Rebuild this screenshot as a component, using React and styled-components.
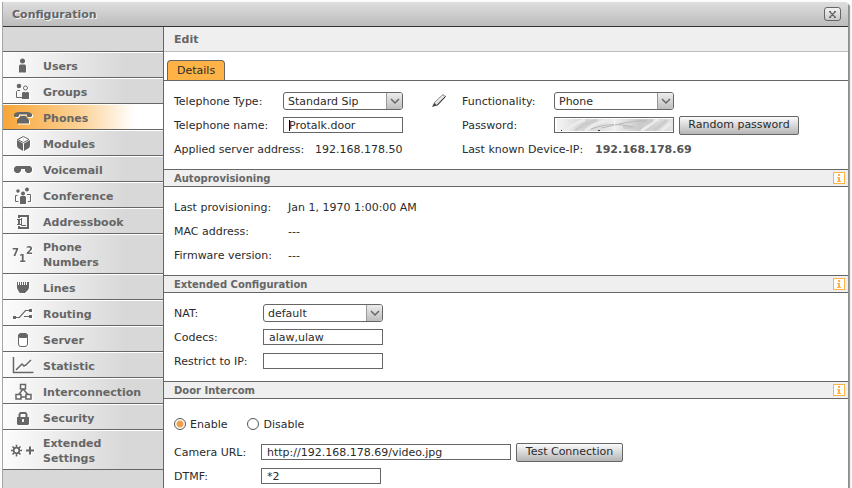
import React from "react";
import styled, { createGlobalStyle, css } from "styled-components";

const ink = "#666666";
const line = "#666666";
const orange = "#ffb347";

const GlobalStyle = createGlobalStyle`
  *, *::before, *::after { box-sizing: border-box; }
  body {
    margin: 0;
    background: #fcfcfc;
    color: #2b2b2b;
    font: 11px/15px "DejaVu Sans", Verdana, sans-serif;
  }
  input, select, button { font: inherit; color: inherit; margin: 0; }
`;

const Viewport = styled.div`
  display: flex;
  height: 100vh;
  padding: 2px 4px 0 2px;
  overflow: hidden;
`;

const Window = styled.div`
  flex: 1;
  display: flex;
  flex-direction: column;
  min-width: 0;
  border-left: 1px solid #a5a5a5;
  border-radius: 0 3px 0 0;
  background: #ffffff;
  box-shadow: 2px 2px 1px #8f8f8f;
`;

const TitleBar = styled.header`
  display: flex;
  flex: none;
  align-items: center;
  justify-content: space-between;
  height: 25px;
  padding: 0 7px 0 9px;
  border-bottom: 1px solid #333333;
  border-radius: 0 3px 0 0;
  background: linear-gradient(#dedede, #bcbcbc);
`;

const Title = styled.h1`
  margin: 0;
  font-size: 11px;
  color: ${ink};
  text-shadow: 1px 1px 0 #f4f4f4;
`;

const raised = css`
  border: 1px solid ${line};
  border-radius: 2px;
  background: linear-gradient(#fbfbfb, #b5b5b5);
`;

const CloseButton = styled.button`
  ${raised}
  display: grid;
  place-items: center;
  width: 17px;
  height: 14px;
  padding: 0;
  border-radius: 3px;
  background: linear-gradient(#f2f2f2, #c9c9c9);
`;

const Columns = styled.div`
  display: flex;
  flex: 1;
  min-height: 0;
`;

const Sidebar = styled.nav`
  flex: none;
  width: 161px;
  padding-top: 24px;
  border-right: 1px solid ${line};
  background: #d8d8d8;
`;

const Menu = styled.ul`
  margin: 0;
  padding: 0;
  list-style: none;
  border-top: 1px solid ${line};
`;

const MenuLink = styled.a`
  display: flex;
  align-items: center;
  gap: 8px;
  min-height: 26px;
  padding: 6px 0 3px 8px;
  border-bottom: 1px solid ${line};
  box-shadow: inset 0 1px 0 #ffffff;
  background: ${(p) =>
    p.$active
      ? "linear-gradient(90deg, #f7a638, #fcd49b 50%, #ffffff 82%)"
      : "linear-gradient(90deg, #fcfcfc, #d8d8d8 76%)"};
  color: ${ink};
  font-weight: bold;
  text-decoration: none;
  white-space: pre-line;
`;

const Glyph = styled.svg`
  flex: none;
  width: 24px;
  height: 24px;
  margin: -6px 0 -3px;
  overflow: visible;
  filter: drop-shadow(1px 1px 0 #ffffff);
`;

const Main = styled.main`
  flex: 1;
  min-width: 0;
`;

const PageHeading = styled.h2`
  height: 25px;
  margin: 0;
  padding: 0 10px;
  border-bottom: 1px solid #bdbdbd;
  background: #efefef;
  color: ${ink};
  font-size: 11px;
  line-height: 26px;
`;

const TabBar = styled.div`
  display: flex;
  align-items: flex-end;
  height: 29px;
  padding-left: 3px;
  border-bottom: 1px solid ${line};
`;

const Tab = styled.button`
  height: 20px;
  padding: 0 9px;
  border: 1px solid ${line};
  border-bottom: 0;
  border-radius: 4px 4px 0 0;
  background: ${orange};
`;

const SectionHeading = styled.div`
  display: flex;
  align-items: center;
  justify-content: space-between;
  height: 18px;
  padding: 0 3px 0 10px;
  border: solid ${line};
  border-width: 1px 0;
  background: #efefef;
`;

const SectionTitle = styled.h3`
  margin: 0;
  color: ${ink};
  font-size: 10px;
`;

const InfoButton = styled.button`
  display: grid;
  width: 12px;
  height: 12px;
  padding: 0;
  border: 1px solid ${orange};
  background: #ffffff;
`;

const Fields = styled.div`
  padding: ${(p) => p.$top || 8}px 10px 8px;
`;

const PairedFields = styled(Fields)`
  display: grid;
  grid-template-columns: 288px 1fr;
`;

const Row = styled.div`
  display: flex;
  align-items: center;
  height: 24px;
`;

const RadioRow = styled(Row)`
  gap: 20px;
  margin-bottom: 4px;
`;

const FieldName = styled.label`
  flex: none;
  width: ${(p) => p.$width}px;
`;

const Caption = styled.span`
  flex: none;
  width: ${(p) => p.$width}px;
`;

const DeviceIp = styled.strong`
  color: #555555;
`;

const SelectBox = styled.div`
  position: relative;
  width: 120px;
  height: 18px;
`;

const NativeSelect = styled.select`
  appearance: none;
  display: block;
  width: 100%;
  height: 100%;
  padding: 0 18px 0 4px;
  border: 1px solid ${line};
  border-radius: 3px;
  background: #ffffff;
`;

const SelectArrow = styled.span`
  position: absolute;
  inset: 1px 1px 1px auto;
  display: grid;
  place-items: center;
  width: 16px;
  border-left: 1px solid #999999;
  border-radius: 0 2px 2px 0;
  background: linear-gradient(#ececec, #bebebe);
  pointer-events: none;
`;

const InputBox = styled.div`
  position: relative;
  width: ${(p) => p.$width || 120}px;
`;

const TextInput = styled.input`
  display: block;
  width: 100%;
  height: 16px;
  padding: 0 5px;
  border: 1px solid ${line};
  border-radius: 0;
  background: #ffffff;
  outline: 0;
`;

const Caret = styled.span`
  position: absolute;
  top: 3px;
  left: 6px;
  width: 1px;
  height: 11px;
  background: #000000;
`;

const Smear = styled.svg`
  position: absolute;
  top: 2px;
  left: 3px;
  width: calc(100% - 4px);
  height: 12px;
`;

const PushButton = styled.button`
  ${raised}
  height: 19px;
  width: ${(p) => p.$width}px;
  margin-left: 5px;
  padding: 0;
  line-height: 16px;
  white-space: nowrap;
`;

const PencilButton = styled.button`
  display: grid;
  width: 16px;
  height: 16px;
  margin-left: 28px;
  padding: 0;
  border: 0;
  background: none;
`;

const Choice = styled.label`
  display: flex;
  align-items: center;
  gap: 4px;
`;

const Radio = styled.input`
  appearance: none;
  width: 12px;
  height: 12px;
  border: 1px solid #555555;
  border-radius: 50%;
  background: #ffffff;
  &:checked {
    background: radial-gradient(circle, #f0a04b 3px, #ffffff 4px);
  }
`;

const glyphs = {
  users: (
    <g fill={ink}>
      <circle cx="11.5" cy="8" r="2.5" />
      <path d="M8 12.500l1-1h5l1 1v7H8z" />
    </g>
  ),
  groups: (
    <g fill={ink}>
      <circle cx="8" cy="7" r="2.300" />
      <circle cx="14.5" cy="9" r="2" fill="#fff" stroke={ink} />
      <path d="M11 18.500H5.500v-6l1-1H9" fill="none" stroke={ink} />
      <path d="M11 14l1-1h2l.5 1 .5-1h2l1 1v6h-7z" />
    </g>
  ),
  phones: (
    <g fill={ink}>
      <path d="M3 11V9l2-1.500L8 7h8l3 .5L21 9v2l-1 1h-3l-1-1V9.500H8V11l-1 1H4z" />
      <path d="M9.500 11h5l3.500 4v3.500H6V15z" />
    </g>
  ),
  modules: (
    <g>
      <path d="M12.500 5.500l5.500 3-5.500 3-6-3z" fill="#fff" stroke={ink} />
      <path d="M6 9l6 3.500v7.500L7 17l-1-2zM19 9l-6 3.500v7.500l5-3 1-2z" fill={ink} />
      <path d="M12.500 7v3" stroke="#dddddd" />
    </g>
  ),
  voicemail: (
    <path d="M5 9h14l2 2v3l-2 2h-3l-2-2v-2h-4v2l-2 2H5l-2-2v-3z" fill={ink} />
  ),
  conference: (
    <g fill={ink}>
      <circle cx="7" cy="8" r="1.800" />
      <circle cx="16" cy="6.500" r="2" />
      <circle cx="12" cy="10.500" r="2" />
      <path d="M9 14l1-1h4l1 1v7H9z" />
      <path d="M7.500 18.500h-3v-6h2M16 11.500h3.500v7H17" fill="none" stroke={ink} />
    </g>
  ),
  addressbook: (
    <g fill="none" stroke={ink} strokeWidth="2">
      <path d="M8 9V7h9v12H8v-2M8 11v4" />
      <path d="M6 10.500h4M6 15.500h4" strokeWidth="1" />
      <path d="M10.500 9v7.500H15" strokeWidth="1" />
    </g>
  ),
  numbers: (
    <g fill={ink} fontFamily="DejaVu Sans, sans-serif" fontWeight="bold" fontSize="10">
      <text x="1" y="14">7</text>
      <text x="8" y="20">1</text>
      <text x="15" y="12">2</text>
    </g>
  ),
  lines: (
    <path d="M6 7h1v3h1V7h1v3h1V7h1v3h1V7h1v3h1V7h1v3h1V7h2v6l-1 2-2 2-1 1H9l-1-1-1-2-1-2z" fill={ink} />
  ),
  routing: (
    <g fill={ink}>
      <path d="M3 16.500h5.500l6-7H20M13 15.500h7" fill="none" stroke={ink} strokeWidth="1.200" />
      <path d="M2 15h3v3H2zM18 8h3v3h-3zM18 14h3v3h-3z" />
    </g>
  ),
  server: (
    <g>
      <rect x="7.500" y="7" width="9" height="12.500" rx="2.500" fill="#fff" stroke={ink} />
      <path d="M9 6h6l2 2v2l-2 1H9l-2-1V8z" fill={ink} />
    </g>
  ),
  statistic: (
    <g fill="none" stroke={ink}>
      <path d="M2.500 4v15.500H22.500" strokeWidth="1.500" />
      <path d="M5 17l6-6 2 2 2-1 5-5" strokeWidth="1.500" />
    </g>
  ),
  interconnection: (
    <g fill="#fff" stroke={ink} strokeWidth="1.500">
      <path d="M12 10l-4.500 6M12 10l5.500 6" />
      <path d="M9.500 5.500h5v4.500h-5zM5 15.500h5v4.500H5zM15 15.500h5v4.500h-5zM10 18h5" />
    </g>
  ),
  security: (
    <g>
      <path d="M8.500 13V9.500l1-1.500h5l1 1.500V13" fill="none" stroke={ink} strokeWidth="2" />
      <path d="M6 12h12v7l-1 1H7l-1-1z" fill={ink} />
      <path d="M11 14h2v3h-2z" fill="#eeeeee" />
    </g>
  ),
  extended: (
    <g fill="none" stroke={ink}>
      <circle cx="5.500" cy="12.500" r="2.800" strokeWidth="1.700" />
      <path d="M5.500 6.700v3M5.500 15.500v3M0 12.500h2.500M8.500 12.500H11M1.500 8.500l2 2M7.500 14.500l2 2M9.500 8.500l-2 2M3.500 14.500l-2 2" strokeWidth="1.600" />
      <path d="M19 8.500v8M15 12.500h8" strokeWidth="2" />
    </g>
  ),
};

const menu = [
  ["users", "Users"],
  ["groups", "Groups"],
  ["phones", "Phones"],
  ["modules", "Modules"],
  ["voicemail", "Voicemail"],
  ["conference", "Conference"],
  ["addressbook", "Addressbook"],
  ["numbers", "Phone\nNumbers"],
  ["lines", "Lines"],
  ["routing", "Routing"],
  ["server", "Server"],
  ["statistic", "Statistic"],
  ["interconnection", "Interconnection"],
  ["security", "Security"],
  ["extended", "Extended\nSettings"],
];

function Select({ id, value }) {
  return (
    <SelectBox>
      <NativeSelect id={id} defaultValue={value}>
        <option>{value}</option>
      </NativeSelect>
      <SelectArrow>
        <svg width="10" height="7" viewBox="0 0 10 7" aria-hidden="true">
          <path d="M1 1l4 4 4-4" fill="none" stroke={ink} strokeWidth="1.500" />
        </svg>
      </SelectArrow>
    </SelectBox>
  );
}

function Section({ title, children }) {
  return (
    <section>
      <SectionHeading>
        <SectionTitle>{title}</SectionTitle>
        <InfoButton aria-label={`About ${title}`}>
          <svg width="10" height="10" viewBox="0 0 10 10" aria-hidden="true">
            <path d="M4 1h2v2H4zM3 4h3v4h1v1H3V8h1V5H3z" fill={orange} />
          </svg>
        </InfoButton>
      </SectionHeading>
      {children}
    </section>
  );
}

function PasswordSmear() {
  return (
    <Smear viewBox="0 0 116 12" preserveAspectRatio="none" aria-hidden="true">
      <defs>
        <linearGradient id="smear" x1="0" x2="1" y1="0" y2="0">
          <stop offset="0" stopColor="#f5f5f5" />
          <stop offset=".25" stopColor="#d2d2d2" />
          <stop offset=".5" stopColor="#eeeeee" />
          <stop offset=".72" stopColor="#c8c8c8" />
          <stop offset="1" stopColor="#e4e4e4" />
        </linearGradient>
      </defs>
      <path d="M0 0h116v12H0z" fill="url(#smear)" />
      <g fill="none" strokeWidth="3">
        <path d="M8 12C14 8 18 3 28 1M28 12C34 7 40 4 50 1M84 12C90 9 94 3 102 0M104 12l10-8" stroke="#ececec" />
        <path d="M18 12C24 7 30 3 40 1M66 8C80 10 88 6 96 1M96 12l14-11" stroke="#cccccc" />
        <path d="M34 10C48 5 60 4 76 8M44 9C60 6 74 1 90 2" stroke="#b8b8b8" strokeWidth="1" />
      </g>
      <path d="M57 0h1v12h-1z" fill="#f4f4f4" />
      <path d="M4 11h1v1H4zM41 11h2v1h-2z" fill="#333333" />
    </Smear>
  );
}

export default function App() {
  return (
    <>
      <GlobalStyle />
      <Viewport>
        <Window>
          <TitleBar>
            <Title>Configuration</Title>
            <CloseButton aria-label="Close">
              <svg width="7" height="7" viewBox="0 0 7 7" aria-hidden="true">
                <path d="M0 .5h2M5 .5h2M0 6.500h2M5 6.500h2M1 1l5 5M6 1L1 6" stroke={ink} strokeWidth="1.300" />
              </svg>
            </CloseButton>
          </TitleBar>
          <Columns>
            <Sidebar aria-label="Configuration areas">
              <Menu>
                {menu.map(([key, label]) => (
                  <li key={key}>
                    <MenuLink href={`#${key}`} $active={key === "phones"}>
                      <Glyph viewBox="0 0 24 24" aria-hidden="true">{glyphs[key]}</Glyph>
                      <span>{label}</span>
                    </MenuLink>
                  </li>
                ))}
              </Menu>
            </Sidebar>
            <Main>
              <PageHeading>Edit</PageHeading>
              <TabBar role="tablist">
                <Tab role="tab" aria-selected="true">Details</Tab>
              </TabBar>
              <PairedFields>
                <Row>
                  <FieldName $width={109} htmlFor="type">Telephone Type:</FieldName>
                  <Select id="type" value="Standard Sip" />
                  <PencilButton aria-label="Edit telephone type">
                    <svg width="16" height="16" viewBox="0 0 16 16" aria-hidden="true">
                      <path d="M3 10L12 1.500l2.500 2L6 12.500z" fill="#d8d8d8" stroke="#888888" />
                      <path d="M6 12.500l8.500-9" stroke="#222222" />
                      <path d="M1 14l2-4 3 2.500z" fill="#444444" />
                      <path d="M4.500 10L12 3" stroke="#ffffff" />
                    </svg>
                  </PencilButton>
                </Row>
                <Row>
                  <FieldName $width={92} htmlFor="function">Functionality:</FieldName>
                  <Select id="function" value="Phone" />
                </Row>
                <Row>
                  <FieldName $width={109} htmlFor="name">Telephone name:</FieldName>
                  <InputBox>
                    <TextInput id="name" defaultValue="Protalk.door" />
                    <Caret />
                  </InputBox>
                </Row>
                <Row>
                  <FieldName $width={92} htmlFor="password">Password:</FieldName>
                  <InputBox>
                    <TextInput id="password" type="password" />
                    <PasswordSmear />
                  </InputBox>
                  <PushButton $width={120}>Random password</PushButton>
                </Row>
                <Row>
                  <Caption $width={141}>Applied server address:</Caption>
                  <span>192.168.178.50</span>
                </Row>
                <Row>
                  <Caption $width={133}>Last known Device-IP:</Caption>
                  <DeviceIp>192.168.178.69</DeviceIp>
                </Row>
              </PairedFields>
              <Section title="Autoprovisioning">
                <Fields>
                  <Row>
                    <Caption $width={114}>Last provisioning:</Caption>
                    <span>Jan 1, 1970 1:00:00 AM</span>
                  </Row>
                  <Row>
                    <Caption $width={114}>MAC address:</Caption>
                    <span>---</span>
                  </Row>
                  <Row>
                    <Caption $width={114}>Firmware version:</Caption>
                    <span>---</span>
                  </Row>
                </Fields>
              </Section>
              <Section title="Extended Configuration">
                <Fields>
                  <Row>
                    <FieldName $width={89} htmlFor="nat">NAT:</FieldName>
                    <Select id="nat" value="default" />
                  </Row>
                  <Row>
                    <FieldName $width={89} htmlFor="codecs">Codecs:</FieldName>
                    <InputBox>
                      <TextInput id="codecs" defaultValue="alaw,ulaw" />
                    </InputBox>
                  </Row>
                  <Row>
                    <FieldName $width={89} htmlFor="restrict">Restrict to IP:</FieldName>
                    <InputBox>
                      <TextInput id="restrict" />
                    </InputBox>
                  </Row>
                </Fields>
              </Section>
              <Section title="Door Intercom">
                <Fields $top={13}>
                  <RadioRow>
                    <Choice>
                      <Radio type="radio" name="intercom" defaultChecked />
                      Enable
                    </Choice>
                    <Choice>
                      <Radio type="radio" name="intercom" />
                      Disable
                    </Choice>
                  </RadioRow>
                  <Row>
                    <FieldName $width={87} htmlFor="camera">Camera URL:</FieldName>
                    <InputBox $width={250}>
                      <TextInput id="camera" defaultValue="http://192.168.178.69/video.jpg" />
                    </InputBox>
                    <PushButton $width={107}>Test Connection</PushButton>
                  </Row>
                  <Row>
                    <FieldName $width={87} htmlFor="dtmf">DTMF:</FieldName>
                    <InputBox>
                      <TextInput id="dtmf" defaultValue="*2" />
                    </InputBox>
                  </Row>
                </Fields>
              </Section>
            </Main>
          </Columns>
        </Window>
      </Viewport>
    </>
  );
}
